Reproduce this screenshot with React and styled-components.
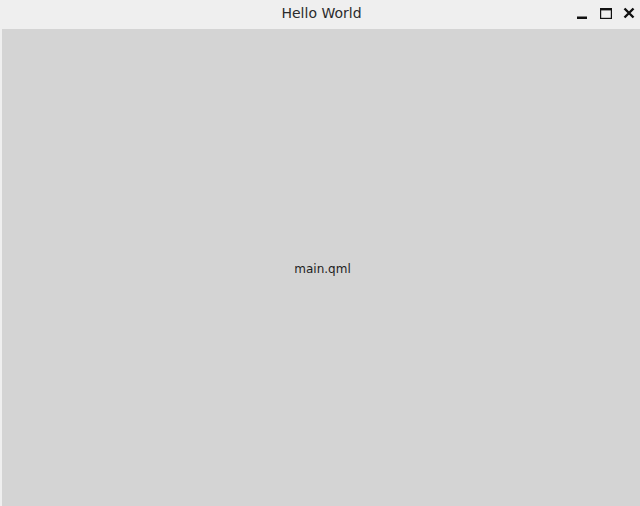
import React from "react";
import styled, { createGlobalStyle } from "styled-components";

const Global = createGlobalStyle`
  html, body { margin: 0; padding: 0; }
  body { width: 640px; height: 506px; overflow: hidden; background: #efefef; font-family: "DejaVu Sans", sans-serif; }
`;

const Window = styled.div`
  width: 640px;
  height: 506px;
  display: flex;
  flex-direction: column;
  background: #efefef;
`;

const TitleBar = styled.div`
  height: 29px;
  flex: none;
  position: relative;
  display: flex;
  align-items: center;
  justify-content: center;
  background: #efefef;
`;

const Title = styled.div`
  font-family: "DejaVu Sans", sans-serif;
  font-size: 14px;
  color: #2b2b2b;
  margin-top: -4px;
  margin-left: 3px;
`;

const Controls = styled.div`
  position: absolute;
  right: 5px;
  top: 7px;
  display: flex;
  gap: 11px;
  align-items: center;
`;

const Body = styled.div`
  flex: 1;
  margin-left: 2px;
  background: #d4d4d4;
  display: flex;
  align-items: center;
  justify-content: center;
`;

const Label = styled.div`
  font-family: "DejaVu Sans", sans-serif;
  font-size: 12px;
  color: #1e1e1e;
  margin-left: 3px;
  margin-top: 2px;
`;

export default function App() {
  return (
    <>
      <Global />
      <Window>
        <TitleBar>
          <Title>Hello World</Title>
          <Controls>
            <svg width="12" height="13" viewBox="0 0 12 13">
              <rect x="0" y="9.5" width="10" height="2.5" fill="#111" />
            </svg>
            <svg width="12" height="13" viewBox="0 0 12 13">
              <rect x="0.6" y="1.6" width="10.8" height="9.8" fill="none" stroke="#111" strokeWidth="1.2" />
              <rect x="0" y="1" width="12" height="2.4" fill="#111" />
            </svg>
            <svg width="12" height="13" viewBox="0 0 12 13">
              <path d="M1.5 1.5 L10.5 10.5 M10.5 1.5 L1.5 10.5" stroke="#111" strokeWidth="2.4" />
            </svg>
          </Controls>
        </TitleBar>
        <Body>
          <Label>main.qml</Label>
        </Body>
      </Window>
    </>
  );
}
